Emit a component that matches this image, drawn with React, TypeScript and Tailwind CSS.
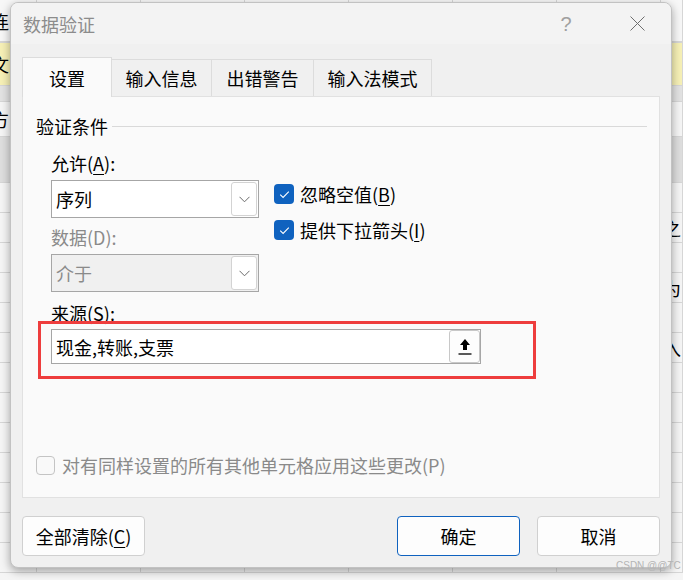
import React from "react";

const COLS = [37, 104, 104, 104, 104, 104, 104, 22];

type Row = { h: number; bg: string; border?: string; left?: string; right?: string };

const ROWS: Row[] = [
  { h: 42, bg: "bg-[#f7f7f7]", left: "连" },
  { h: 44, bg: "bg-[#f6f0b6]", border: "border-y border-[#c9a400]", left: "文" },
  { h: 16, bg: "bg-[#e2e2e2]" },
  { h: 35, bg: "bg-[#f5f5f5]", left: "方" },
  { h: 46, bg: "bg-[#dedede]" },
  { h: 30, bg: "bg-[#f5f5f5]" },
  { h: 30, bg: "bg-[#f5f5f5]", right: "之" },
  { h: 30, bg: "bg-[#f5f5f5]" },
  { h: 30, bg: "bg-[#f5f5f5]", right: "为" },
  { h: 30, bg: "bg-[#f5f5f5]" },
  { h: 30, bg: "bg-[#f5f5f5]", right: "入" },
  { h: 30, bg: "bg-[#f5f5f5]" },
  { h: 30, bg: "bg-[#f5f5f5]" },
  { h: 30, bg: "bg-[#f5f5f5]" },
  { h: 30, bg: "bg-[#f5f5f5]" },
  { h: 30, bg: "bg-[#f5f5f5]" },
  { h: 30, bg: "bg-[#f5f5f5]" },
  { h: 30, bg: "bg-[#f5f5f5]" },
];

function Sheet() {
  return (
    <div className="flex flex-col">
      {ROWS.map((r, i) => (
        <div
          key={i}
          className={`flex shrink-0 border-b border-[#d6d6d6] ${r.bg} ${r.border ?? ""}`}
          style={{ height: r.h }}
        >
          {COLS.map((w, j) => (
            <div
              key={j}
              className="relative flex shrink-0 items-center overflow-hidden border-r border-[#d6d6d6]"
              style={{ width: w }}
            >
              {j === 0 && r.left && (
                <span className="-ml-[9px] text-[18px] leading-[24px] text-black">{r.left}</span>
              )}
              {j === COLS.length - 1 && r.right && (
                <span className="ml-[2px] text-[18px] leading-[24px] text-black">{r.right}</span>
              )}
            </div>
          ))}
        </div>
      ))}
    </div>
  );
}

function Chevron() {
  return (
    <svg width="11" height="7" viewBox="0 0 11 7">
      <path d="M0.5 0.8 L5.5 5.8 L10.5 0.8" fill="none" stroke="#6a6a6a" strokeWidth="1" />
    </svg>
  );
}

function Select({ value, disabled }: { value: string; disabled?: boolean }) {
  return (
    <div
      className={`flex h-[38px] w-[208px] items-center border border-[#a6a6a6] ${
        disabled ? "bg-[#f0f0f0]" : "bg-white"
      }`}
    >
      <span
        className={`flex-1 pl-[4px] text-[18px] leading-[24px] ${
          disabled ? "text-[#8a8a8a]" : "text-black"
        }`}
      >
        {value}
      </span>
      <div className="mr-[1px] flex h-[34px] w-[26px] items-center justify-center rounded-[3px] border border-[#d3d3d3] bg-white">
        <Chevron />
      </div>
    </div>
  );
}

function Checked({ children }: { children: React.ReactNode }) {
  return (
    <div className="flex h-[20px] items-center gap-[6px]">
      <div className="flex h-[20px] w-[20px] items-center justify-center rounded-[4px] bg-[#0f62bf]">
        <svg width="11" height="9" viewBox="0 0 11 9">
          <path d="M1.2 4.6 L4.1 7.4 L9.8 1.6" fill="none" stroke="white" strokeWidth="1.1" />
        </svg>
      </div>
      <span className="text-[18px] leading-[24px] text-black">{children}</span>
    </div>
  );
}

function Tab({ label, active, w }: { label: string; active?: boolean; w: number }) {
  return (
    <div
      className={`flex shrink-0 items-center justify-center border border-b-0 border-[#dcdcdc] text-[18px] leading-[24px] text-black ${
        active ? "relative z-10 -mb-px h-[40px] bg-[#fafafa]" : "h-[37px] border-l-0 bg-[#f0f0f0]"
      }`}
      style={{ width: w }}
    >
      {label}
    </div>
  );
}

function Button({ children, primary }: { children: React.ReactNode; primary?: boolean }) {
  return (
    <div
      className={`flex h-[40px] w-[123px] items-center justify-center rounded-[4px] bg-[#fdfdfd] text-[18px] leading-[24px] text-black ${
        primary ? "border border-[#0f62bf]" : "border border-[#d0d0d0]"
      }`}
    >
      {children}
    </div>
  );
}

export default function App() {
  return (
    <div className="relative h-[580px] w-[683px] overflow-hidden bg-[#f5f5f5] font-['Noto_Sans_CJK_SC','Noto_Sans',sans-serif]">
      <Sheet />

      {/* Dialog window */}
      <div className="absolute left-[10px] top-[2px] flex h-[566px] w-[662px] flex-col overflow-hidden rounded-[8px] border border-[#c2c2c2] bg-[#f0f0f0] shadow-[0_3px_10px_rgba(0,0,0,0.35)]">
        {/* Title bar */}
        <div className="flex h-[41px] shrink-0 items-center bg-[#f3f3f3] pl-[12px] pr-[24px]">
          <span className="text-[18px] leading-[24px] text-[#8c8c8c]">数据验证</span>
          <span className="ml-auto w-[20px] text-center font-['Liberation_Sans',sans-serif] text-[20px] leading-[24px] text-[#a0a0a0]">
            ?
          </span>
          <div className="ml-[51px] flex w-[20px] items-center justify-center">
            <svg width="15" height="15" viewBox="0 0 15 15">
              <path d="M0.5 0.5 L14.5 14.5 M14.5 0.5 L0.5 14.5" stroke="#6e6e6e" strokeWidth="1" />
            </svg>
          </div>
        </div>

        {/* Tabs */}
        <div className="ml-[11px] mt-[13px] flex h-[39px] shrink-0 items-end">
          <Tab label="设置" active w={90} />
          <Tab label="输入信息" w={100} />
          <Tab label="出错警告" w={102} />
          <Tab label="输入法模式" w={118} />
        </div>

        {/* Panel */}
        <div className="relative mx-[11px] flex h-[402px] shrink-0 flex-col border border-[#e1e1e1] bg-[#fafafa]">
          <div className="mt-[17px] flex h-[24px] items-center pl-[13px] pr-[12px]">
            <span className="text-[18px] leading-[24px] text-black">验证条件</span>
            <div className="ml-[4px] h-px flex-1 bg-[#d9d9d9]" />
          </div>

          <div className="mt-[13px] flex pl-[28px]">
            <div className="flex w-[208px] flex-col">
              <span className="h-[24px] text-[18px] leading-[24px] text-black">
                允许(<span className="underline underline-offset-[3px]">A</span>):
              </span>
              <div className="mt-[5px]">
                <Select value="序列" />
              </div>
              <span className="mt-[7px] h-[24px] text-[18px] leading-[24px] text-[#8a8a8a]">数据(D):</span>
              <div className="mt-[5px]">
                <Select value="介于" disabled />
              </div>
            </div>
            <div className="ml-[15px] flex flex-col gap-[16px] pt-[33px]">
              <Checked>
                忽略空值(<span className="underline underline-offset-[3px]">B</span>)
              </Checked>
              <Checked>
                提供下拉箭头(<span className="underline underline-offset-[3px]">I</span>)
              </Checked>
            </div>
          </div>

          <span className="mt-[9px] h-[24px] pl-[28px] text-[18px] leading-[24px] text-black">来源(S):</span>
          <div className="ml-[28px] mt-[4px] flex h-[35px] w-[430px] items-center border border-[#a6a6a6] bg-white">
            <span className="pl-[4px] text-[18px] leading-[24px] text-black">现金,转账,支票</span>
            <div className="ml-auto flex h-[33px] w-[31px] items-center justify-center rounded-[3px] border border-[#c8c8c8] bg-[#fdfdfd]">
              <svg width="16" height="18" viewBox="0 0 16 18">
                <path d="M8 1 L13 7 L10 7 L10 12 L6 12 L6 7 L3 7 Z" fill="#000" />
                <path d="M1.5 16 L14.5 16" stroke="#000" strokeWidth="1.3" />
              </svg>
            </div>
          </div>

          {/* red annotation box */}
          <div className="absolute left-[15px] top-[224px] h-[58px] w-[498px] border-[3px] border-[#ee3d3d]" />

          <div className="mb-[20px] mt-auto flex items-center gap-[7px] pl-[13px]">
            <div className="h-[19px] w-[19px] rounded-[4px] border border-[#c4c4c4] bg-[#f9f9f9]" />
            <span className="text-[18px] leading-[24px] text-[#8a8a8a]">
              对有同样设置的所有其他单元格应用这些更改(P)
            </span>
          </div>
        </div>

        {/* Buttons */}
        <div className="mt-[18px] flex px-[11px]">
          <Button>
            全部清除(<span className="underline underline-offset-[3px]">C</span>)
          </Button>
          <div className="ml-auto">
            <Button primary>确定</Button>
          </div>
          <div className="ml-[17px]">
            <Button>取消</Button>
          </div>
        </div>
      </div>

      {/* watermark */}
      <span className="absolute left-[616px] top-[559px] font-['Liberation_Sans',sans-serif] text-[10px] leading-[14px] text-[#b4b4b4]">
        CSDN @@TC
      </span>
    </div>
  );
}
